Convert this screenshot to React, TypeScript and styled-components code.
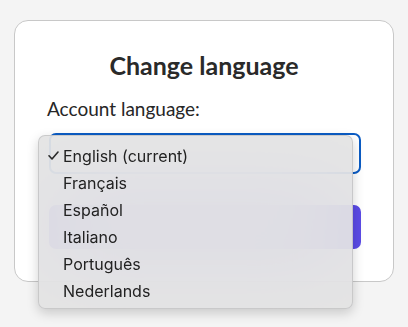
import { createGlobalStyle, styled } from 'styled-components'

const languages = ['English (current)', 'Français', 'Español', 'Italiano', 'Português', 'Nederlands']

const GlobalStyle = createGlobalStyle`
  html, body {
    margin: 0;
    background: #f4f4f4;
  }
  body {
    font-family: Lato, "Noto Sans", sans-serif;
    color: #262626;
  }
`

export default function App(): JSX.Element {
  return (
    <>
      <GlobalStyle />
      <Page>
        <Card>
          <Title>Change language</Title>
          <Label>Account language:</Label>
          <SelectWrap>
            <SelectBox />
            <Menu>
              {languages.map((lang, i) => (
                <MenuItem key={lang}>
                  <Check>
                    {i === 0 && (
                      <svg width="11" height="9" viewBox="0 0 11 9">
                        <path d="M1 4.8 L4 8 L10 1" fill="none" stroke="#2a2a2a" strokeWidth="1.6" strokeLinecap="round" strokeLinejoin="round" />
                      </svg>
                    )}
                  </Check>
                  {lang}
                </MenuItem>
              ))}
            </Menu>
          </SelectWrap>
          <SaveButton />
        </Card>
      </Page>
    </>
  )
}

const Page = styled.div`
  padding: 20px 14px 0;
  width: 408px;
  height: 327px;
  box-sizing: border-box;
`

const Card = styled.div`
  box-sizing: border-box;
  width: 380px;
  height: 262px;
  background: #fff;
  border: 1px solid #c8c8c8;
  border-radius: 14px;
  padding: 29px 32px 0 32px;
  display: flex;
  flex-direction: column;
`

const Title = styled.h1`
  margin: 0;
  font-size: 25px;
  font-weight: 700;
  line-height: 30px;
  text-align: center;
  color: #2a2a2a;
`

const Label = styled.div`
  margin-top: 17px;
  font-size: 19px;
  line-height: 23px;
`

const SelectWrap = styled.div`
  position: relative;
  margin: 13px 0 0 2px;
`

const SelectBox = styled.div`
  height: 41px;
  box-sizing: border-box;
  border: 2px solid #0b5cc4;
  border-radius: 7px;
  background: #fff;
`

const SaveButton = styled.div`
  margin: 31px 0 0 2px;
  height: 44px;
  border-radius: 7px;
  background: #5b4be6;
`

const Menu = styled.div`
  position: absolute;
  left: -11px;
  top: 2px;
  width: 315px;
  box-sizing: border-box;
  padding: 6px 0 4px;
  background: rgba(226, 226, 226, 0.91);
  backdrop-filter: blur(44px);
  border: 1px solid rgba(0, 0, 0, 0.12);
  border-radius: 7px;
  box-shadow: 0 4px 12px rgba(0, 0, 0, 0.18);
  z-index: 2;
`

const MenuItem = styled.div`
  display: flex;
  align-items: center;
  height: 27px;
  font-family: Inter, "Noto Sans", sans-serif;
  font-size: 16px;
  color: #222;
`

const Check = styled.span`
  display: flex;
  align-items: center;
  width: 24px;
  padding-left: 9px;
  box-sizing: border-box;
`
